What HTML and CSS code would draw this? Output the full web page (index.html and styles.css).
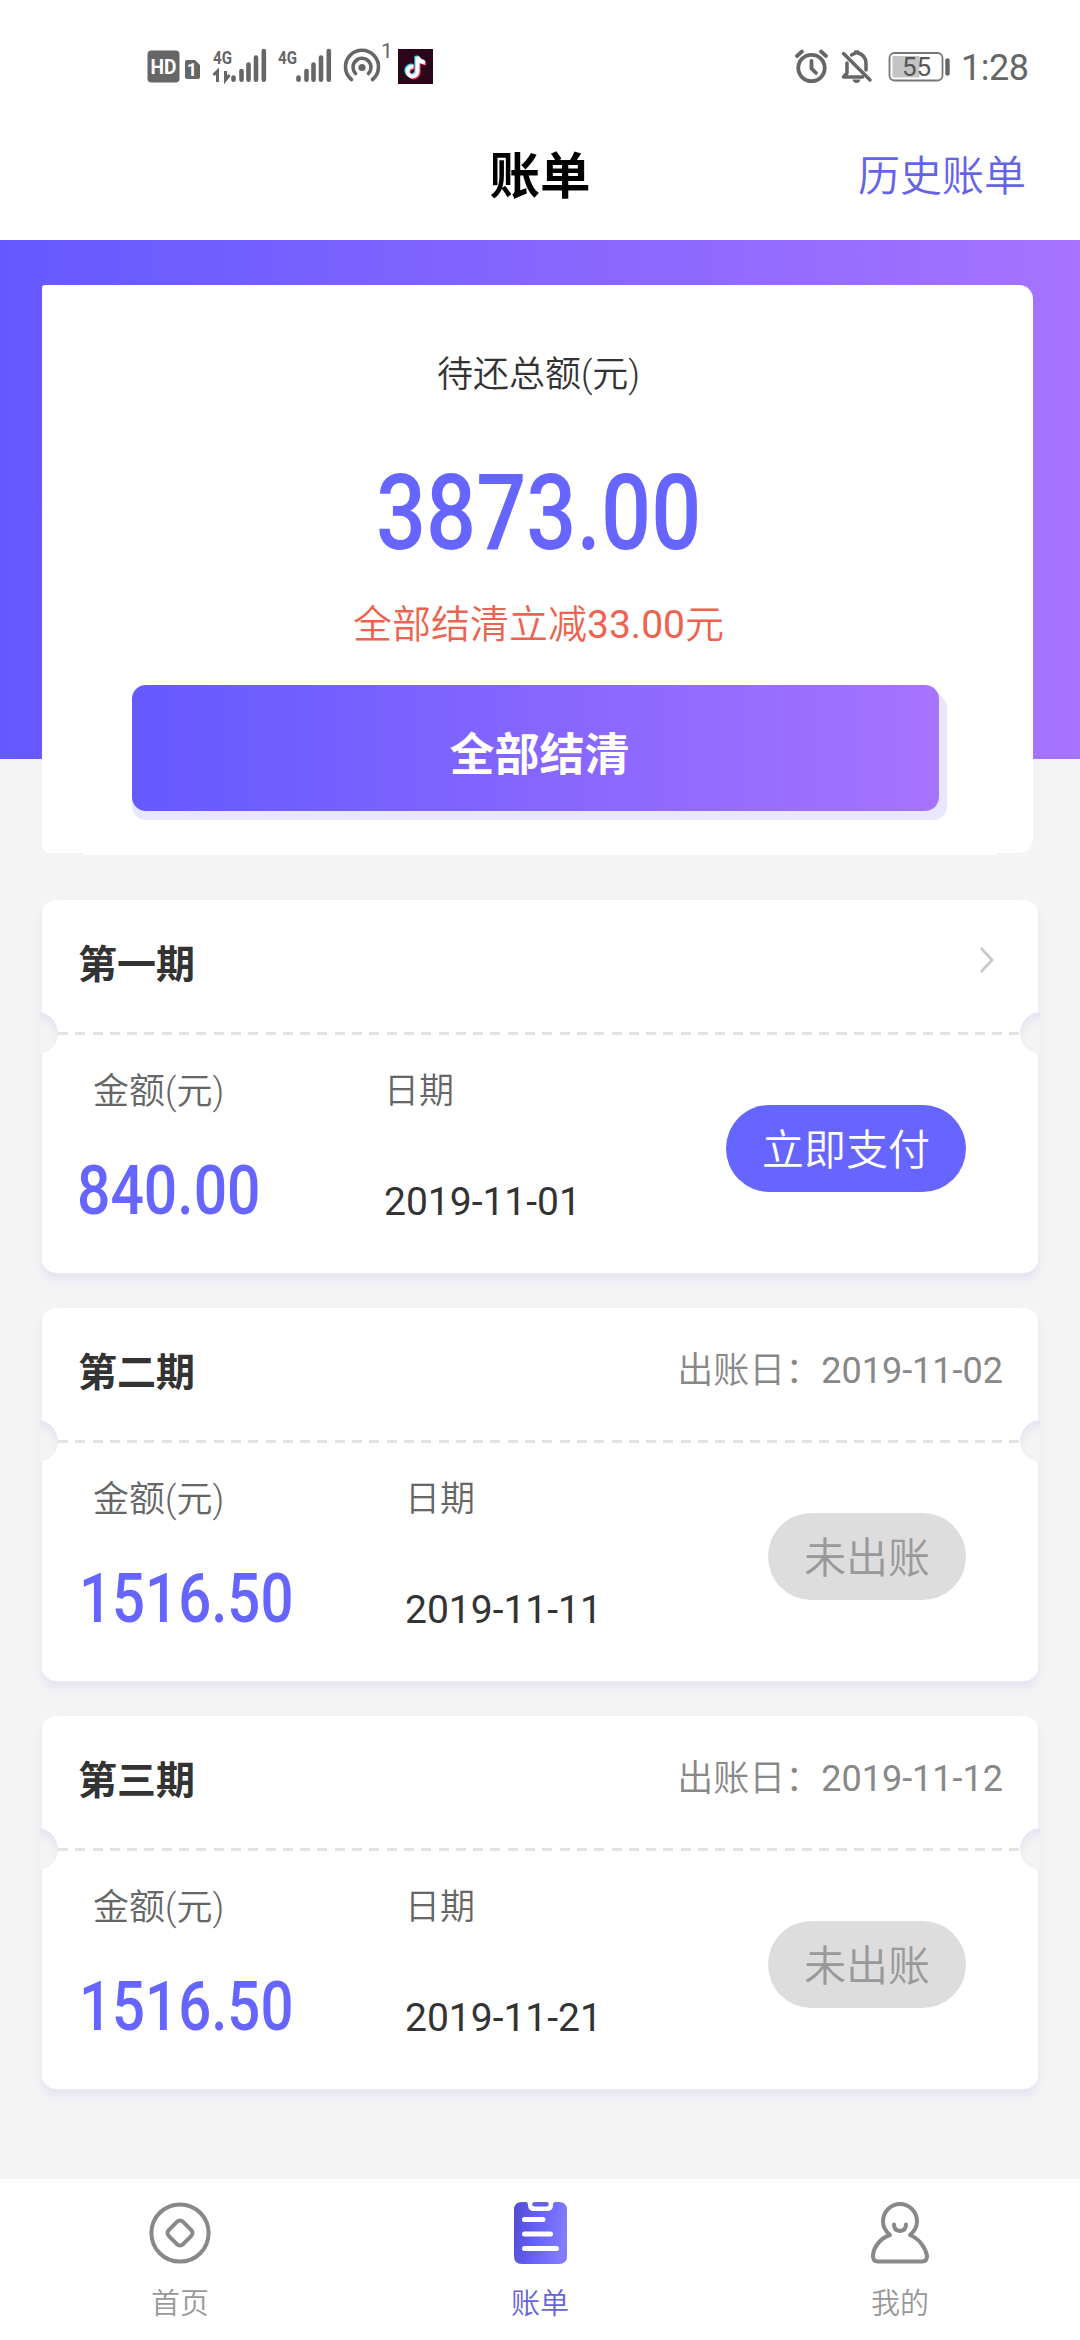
FILE: index.html
```html
<!DOCTYPE html>
<html lang="zh-CN">
<head>
<meta charset="utf-8">
<title>账单</title>
<link rel="stylesheet" href="styles.css">
</head>
<body>
<div class="app">
  <header class="header">
    <div class="status">
      <svg class="status-left" width="290" height="50" viewBox="146 40 290 50">
        <rect x="147.500" y="50.500" width="32" height="32" rx="4" fill="#666"/>
        <text x="163.500" y="74" class="hd" text-anchor="middle" textLength="26" lengthAdjust="spacingAndGlyphs">HD</text>
        <path d="M187 60h8l5 5v12q0 2-2 2h-11q-2 0-2-2v-15q0-2 2-2z" fill="#666"/>
        <text x="192" y="76" class="sim" text-anchor="middle">1</text>
        <text x="213" y="64" class="net" textLength="19" lengthAdjust="spacingAndGlyphs">4G</text>
        <path d="M213.500 75l4-4v11M229.500 75l-4 5v-9" fill="none" stroke="#666" stroke-width="3"/>
        <g stroke="#666" stroke-width="4.600" stroke-linecap="round">
          <path d="M233.500 77.500v2.300M241.500 71v8.800M248.500 64.500v15.300M256 57.500v22.300M263.800 51v28.800"/>
          <path d="M298.500 77.500v2.300M306.500 71v8.800M313.500 64.500v15.300M321 57.500v22.300M328.800 51v28.800"/>
        </g>
        <text x="278" y="64" class="net" textLength="19" lengthAdjust="spacingAndGlyphs">4G</text>
        <g fill="none" stroke="#666" stroke-width="3.600" stroke-linecap="round">
          <path d="M351.500 79.500a16.500 16.500 0 1 1 21 0"/>
          <path d="M355.500 73.500a9 9 0 1 1 13 0"/>
        </g>
        <circle cx="362" cy="67.500" r="3.600" fill="#666"/>
        <text x="381" y="58" class="sup">1</text>
        <rect x="398" y="49" width="35" height="35" fill="#2b0519"/>
        <g fill="none" stroke-width="4">
          <path d="M413.500 66.500a5 5 0 1 0 4 5v-14.500q2 5 7.500 5.500" stroke="#25d8e0" transform="translate(-1.200 -1)"/>
          <path d="M413.500 66.500a5 5 0 1 0 4 5v-14.500q2 5 7.500 5.500" stroke="#f0335c" transform="translate(1.200 1)"/>
          <path d="M413.500 66.500a5 5 0 1 0 4 5v-14.500q2 5 7.500 5.500" stroke="#fff"/>
        </g>
      </svg>
      <svg class="status-right" width="240" height="50" viewBox="792 40 240 50">
        <g fill="none" stroke="#666" stroke-width="3.800" stroke-linecap="round">
          <circle cx="811.500" cy="68" r="13.200"/>
          <path d="M811.500 61v7.500l4.500 4.500M797 56l5-4.500M826 56l-5-4.500"/>
        </g>
        <g fill="none" stroke="#666" stroke-width="3.500" stroke-linecap="round" stroke-linejoin="round">
          <path d="M843.500 53.500l26.500 26.500"/>
          <path d="M847 63v10l-3.500 4h19M851.500 55l4-2v-1h2.500v1q7.500 2 8 10v7"/>
        </g>
        <path d="M852.500 79.500h8q-1 3.500-4 3.500t-4-3.500z" fill="#666"/>
        <rect x="889.500" y="53" width="53" height="27.500" rx="5" fill="none" stroke="#777" stroke-width="1.800"/>
        <rect x="892.500" y="56" width="27" height="21.500" fill="#c4c4c4"/>
        <text x="916.500" y="76" class="battery" text-anchor="middle">55</text>
        <path d="M947.500 60.500v13" stroke="#666" stroke-width="4.400" stroke-linecap="round"/>
        <text x="961" y="80" class="clock" textLength="68">1:28</text>
      </svg>
    </div>
    <div class="titlebar">
      <h1 class="title">账单</h1>
      <a class="history">历史账单</a>
    </div>
  </header>

  <main class="main">
    <section class="hero">
      <div class="summary">
        <div class="summary-label">待还总额(元)</div>
        <div class="summary-amount">3873.00</div>
        <div class="summary-note">全部结清立减<span class="num">33.00</span>元</div>
        <div class="settle">全部结清</div>
      </div>
    </section>

    <section class="bills">
      <article class="bill bill-current">
        <div class="bill-head">
          <h2 class="bill-title">第一期</h2>
          <svg class="chevron" width="16" height="28" viewBox="0 0 16 28"><path d="M2 2l11 12L2 26" fill="none" stroke="#c8c8c8" stroke-width="2.600"/></svg>
        </div>
        <div class="tear"></div>
        <div class="bill-body">
          <div class="col-amount"><div class="label">金额(元)</div><div class="amount">840.00</div></div>
          <div class="col-date"><div class="label">日期</div><div class="date">2019-11-01</div></div>
          <div class="pill pill-pay">立即支付</div>
        </div>
      </article>
      <article class="bill">
        <div class="bill-head">
          <h2 class="bill-title">第二期</h2>
          <div class="issue">出账日：<span class="num">2019-11-02</span></div>
        </div>
        <div class="tear"></div>
        <div class="bill-body">
          <div class="col-amount"><div class="label">金额(元)</div><div class="amount">1516.50</div></div>
          <div class="col-date"><div class="label">日期</div><div class="date">2019-11-11</div></div>
          <div class="pill">未出账</div>
        </div>
      </article>
      <article class="bill">
        <div class="bill-head">
          <h2 class="bill-title">第三期</h2>
          <div class="issue">出账日：<span class="num">2019-11-12</span></div>
        </div>
        <div class="tear"></div>
        <div class="bill-body">
          <div class="col-amount"><div class="label">金额(元)</div><div class="amount">1516.50</div></div>
          <div class="col-date"><div class="label">日期</div><div class="date">2019-11-21</div></div>
          <div class="pill">未出账</div>
        </div>
      </article>
    </section>
  </main>

  <nav class="tabs">
    <a class="tab">
      <svg width="64" height="64" viewBox="0 0 64 64" fill="none" stroke="#888" stroke-width="4">
        <circle cx="32" cy="32" r="28.600"/>
        <rect x="22" y="22" width="20" height="20" rx="4" transform="rotate(45 32 32)"/>
      </svg>
      <span class="tab-label">首页</span>
    </a>
    <a class="tab tab-active">
      <svg width="64" height="64" viewBox="0 0 64 64">
        <defs><linearGradient id="clip" x1="0" y1="0" x2="1" y2=".2"><stop offset="0" stop-color="#504bd0"/><stop offset=".5" stop-color="#6560f8"/><stop offset="1" stop-color="#817bff"/></linearGradient></defs>
        <path d="M14 1h3.500q2.500 0 2.500 3q0 6 6 6h13q6 0 6-6q0-3 2.500-3h3.500q8 0 8 8v46q0 8-8 8h-37q-8 0-8-8v-46q0-8 8-8z" fill="url(#clip)"/>
        <path d="M26.500 3.200h12" stroke="#6560e8" stroke-width="4.500" stroke-linecap="round"/>
        <path d="M16.500 18.500h18.500M16.500 33h26M16.500 47.500h32" stroke="#fff" stroke-width="5" stroke-linecap="round"/>
      </svg>
      <span class="tab-label">账单</span>
    </a>
    <a class="tab">
      <svg width="64" height="64" viewBox="0 0 64 64" fill="none" stroke="#888" stroke-width="4" stroke-linecap="round" stroke-linejoin="round">
        <path d="M22 34C10 38 5 49 5 55Q5 60.500 10 60.500H54Q59 60.500 59 55C58 48 52 38 42 34Q49 28 49 20.500A17 17.500 0 0 0 15 20.500Q15 28 22 34Z"/>
        <path d="M26 23.500q0 6 6 6.500q6-.5 6-6.500"/>
      </svg>
      <span class="tab-label">我的</span>
    </a>
  </nav>
</div>
</body>
</html>
```
FILE: styles.css
```css
* { box-sizing: border-box; }

body {
  margin: 0;
  background: #f4f4f4;
  font-family: Roboto, "Noto Sans CJK SC", sans-serif;
  font-weight: 400;
  color: #333;
}

.app {
  width: 1080px;
  height: 2340px;
  display: flex;
  flex-direction: column;
  overflow: hidden;
}

.header {
  flex: none;
  height: 240px;
  background: #fff;
  display: flex;
  flex-direction: column;
}

.status {
  height: 110px;
  padding: 40px 48px 0 146px;
  display: flex;
  justify-content: space-between;
}

.hd { font: 700 21px Roboto, sans-serif; fill: #fff; }
.sim { font: 700 18px Roboto, sans-serif; fill: #fff; }
.net { font: 700 19px Roboto, sans-serif; fill: #666; }
.sup { font: 400 21px Roboto, sans-serif; fill: #666; }
.battery { font: 400 26px Roboto, sans-serif; fill: #555; }
.clock { font: 400 36px Roboto, sans-serif; fill: #666; }

.num { font-weight: 400; }

.titlebar {
  height: 130px;
  padding: 0 54px;
  display: grid;
  grid-template-columns: 1fr auto 1fr;
  align-items: start;
}

.title {
  grid-column: 2;
  margin: 0;
  font-size: 50.500px;
  font-weight: 700;
  line-height: 134px;
  color: #000;
}

.history {
  justify-self: end;
  font-size: 42px;
  font-weight: 350;
  line-height: 133px;
  color: #6563e8;
}

.main { flex: 1; }

.hero {
  height: 519px;
  padding: 45px 47px 0 42px;
  background: linear-gradient(90deg, #6459ff, #a773ff);
}

.summary {
  position: relative;
  height: 568px;
  padding: 64px 90px 0;
  background: #fff;
  border-radius: 3px 14px 14px 8px;
  display: flex;
  flex-direction: column;
  align-items: center;
}

/* raised lower lip of the card */
.summary::after {
  content: "";
  position: absolute;
  left: 42px;
  right: 37px;
  bottom: -2px;
  height: 2px;
  background: #fff;
}

.summary-label {
  margin-left: 2px;
  height: 52px;
  line-height: 52px;
  font-size: 36px;
  font-weight: 350;
}

.summary-amount {
  margin: 51px 0 0 3px;
  height: 124px;
  line-height: 124px;
  font-size: 105px;
  font-weight: 500;
  color: #6665ff;
  transform: scaleX(.84);
}

.summary-note {
  margin: 21px 0 0 2px;
  height: 56px;
  line-height: 57px;
  font-size: 39px;
  font-weight: 350;
  color: #ec6450;
}

.settle {
  align-self: stretch;
  margin: 32px 4px 0 0;
  padding-left: 8px;
  height: 126px;
  line-height: 141px;
  text-align: center;
  font-size: 45px;
  font-weight: 700;
  color: #fff;
  border-radius: 14px;
  background: linear-gradient(90deg, #6459ff, #a773ff);
  box-shadow: 0 9px 0 #e9e6ff, 4px 4px 0 #e9e6ff, 8px 9px 0 #e9e6ff;
}

.bills {
  padding: 141px 42px 0;
  display: flex;
  flex-direction: column;
  gap: 35px;
}

.bill {
  height: 373px;
  background: #fff;
  border-radius: 14px;
  box-shadow: 0 7px 8px rgba(100, 95, 235, .1);
}

.bill-head {
  height: 112px;
  padding: 0 35px 0 36px;
  display: flex;
  justify-content: space-between;
}

.bill-title {
  margin: 0;
  font-size: 39px;
  font-weight: 700;
  line-height: 130px;
}

.chevron { margin: 46px 8px 0 0; }

.issue {
  font-size: 36px;
  font-weight: 350;
  line-height: 127px;
  color: #888;
}

.tear {
  position: relative;
  height: 42px;
  margin: 0 -2px;
  overflow: hidden;
  background: repeating-linear-gradient(90deg, #e3e3e3 0 10px, transparent 10px 17.300px) 18px 20px / 964px 3px no-repeat;
}

.tear::before,
.tear::after {
  content: "";
  position: absolute;
  top: 0;
  width: 42px;
  height: 42px;
  border-radius: 50%;
  background: #f4f4f4;
  box-shadow: inset 0 6px 8px rgba(100, 95, 235, .1);
}

.tear::before { left: -24px; }
.tear::after { right: -22px; }

.bill-body {
  height: 219px;
  padding: 0 72px 0 37px;
  display: flex;
}

.col-amount { width: 326px; }
.bill-current .col-amount { width: 305px; }
.col-date { flex: 1; }

.label {
  margin-top: 12px;
  height: 52px;
  line-height: 52px;
  font-size: 35px;
  font-weight: 350;
  color: #666;
}

.col-amount .label { padding-left: 14px; font-size: 36px; }

.amount {
  margin-top: 33px;
  height: 80px;
  line-height: 80px;
  font-size: 68px;
  font-weight: 500;
  color: #6665ff;
  transform: scaleX(.855);
  transform-origin: left;
}

.bill-current .amount {
  margin-left: -2px;
  transform: scaleX(.865);
}

.date {
  margin-top: 61px;
  height: 46px;
  line-height: 46px;
  font-size: 39px;
  color: #333;
}

.pill {
  flex: none;
  width: 198px;
  height: 87px;
  margin-top: 51px;
  border-radius: 43.500px;
  text-align: center;
  line-height: 92px;
  font-size: 42px;
  font-weight: 350;
  background: #ddd;
  color: #999;
}

.pill-pay {
  width: 240px;
  background: #6665ff;
  color: #fff;
}

.tabs {
  flex: none;
  height: 161px;
  background: #fff;
  display: grid;
  grid-template-columns: repeat(3, 1fr);
}

.tab {
  display: flex;
  flex-direction: column;
  align-items: center;
  padding-top: 22px;
  color: #999;
}

.tab-label {
  margin-top: 18px;
  height: 42px;
  line-height: 42px;
  font-size: 29px;
  font-weight: 350;
}

.tab-active { color: #6563dd; }
```
